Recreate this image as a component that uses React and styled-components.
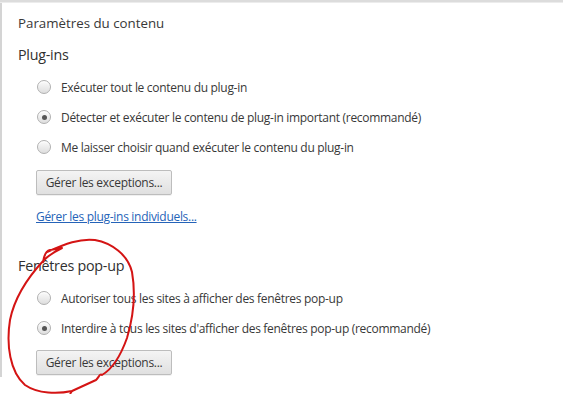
import styled, { createGlobalStyle } from "styled-components";

const GlobalStyle = createGlobalStyle`
  html, body {
    margin: 0;
    padding: 0;
    background: #fff;
  }
  body {
    font-family: "Open Sans", "Noto Sans", sans-serif;
    color: #333;
  }
`;

const Page = styled.div`
  position: relative;
  width: 563px;
  height: 394px;
  overflow: hidden;
  background: #fff;
`;

const TopBar = styled.div`
  height: 2px;
  background: #dcdcdc;
  border-bottom: 1px solid #ececec;
`;

const Panel = styled.div`
  display: flex;
  flex-direction: column;
  align-items: flex-start;
  height: 374px;
  box-sizing: border-box;
  border-left: 2px solid #d4d4d4;
  padding: 10px 0 0 16px;
`;

const Title = styled.div`
  font-size: 13.3px;
  line-height: 20px;
  color: #383838;
`;

const Heading = styled.div`
  font-size: 14.3px;
  line-height: 20px;
  letter-spacing: -0.25px;
  color: #303030;
  margin-top: ${(p) => p.$top}px;
`;

const Options = styled.div`
  display: flex;
  flex-direction: column;
  margin-top: ${(p) => p.$top}px;
`;

const Option = styled.label`
  display: flex;
  align-items: center;
  gap: 10px;
  height: 30px;
  padding-left: 19px;
  font-size: 12px;
  letter-spacing: -0.3px;
  color: #383838;
`;

const Radio = styled.span`
  position: relative;
  width: 14px;
  height: 14px;
  box-sizing: border-box;
  border-radius: 50%;
  border: 1px solid #b0b0b0;
  background: linear-gradient(#fbfbfb, #dedede);
  box-shadow: inset 0 1px 1px #fff;
  flex-shrink: 0;

  &::after {
    content: "";
    display: ${(p) => (p.$checked ? "block" : "none")};
    position: absolute;
    left: 3.5px;
    top: 3.5px;
    width: 5px;
    height: 5px;
    border-radius: 50%;
    background: #555;
  }
`;

const Button = styled.button`
  margin: ${(p) => p.$top}px 0 0 18px;
  width: 136px;
  height: 25px;
  padding: 0;
  font-family: inherit;
  font-size: 12px;
  letter-spacing: -0.3px;
  color: #383838;
  border: 1px solid #bdbdbd;
  border-radius: 2px;
  background: linear-gradient(#f4f4f4, #e0e0e0);
  box-shadow: 0 1px 0 rgba(0, 0, 0, 0.06);
`;

const Link = styled.a`
  margin: 14px 0 0 18px;
  font-size: 12px;
  line-height: 16px;
  letter-spacing: -0.3px;
  color: #2563b8;
  text-decoration: underline;
  cursor: pointer;
`;

const Scribble = styled.svg`
  position: absolute;
  left: 0;
  top: 0;
  pointer-events: none;
`;

const plugins = [
  { label: "Exécuter tout le contenu du plug-in" },
  { label: "Détecter et exécuter le contenu de plug-in important (recommandé)", checked: true },
  { label: "Me laisser choisir quand exécuter le contenu du plug-in" },
];

const popups = [
  { label: "Autoriser tous les sites à afficher des fenêtres pop-up" },
  { label: "Interdire à tous les sites d'afficher des fenêtres pop-up (recommandé)", checked: true },
];

function OptionList({ items, top }) {
  return (
    <Options $top={top}>
      {items.map((item) => (
        <Option key={item.label}>
          <Radio $checked={item.checked} />
          {item.label}
        </Option>
      ))}
    </Options>
  );
}

export default function App() {
  return (
    <Page>
      <GlobalStyle />
      <TopBar />
      <Panel>
        <Title>Paramètres du contenu</Title>
        <Heading $top={12}>Plug-ins</Heading>
        <OptionList items={plugins} top={7} />
        <Button $top={8}>Gérer les exceptions...</Button>
        <Link>Gérer les plug-ins individuels...</Link>
        <Heading $top={31}>Fenêtres pop-up</Heading>
        <OptionList items={popups} top={7} />
        <Button $top={7}>Gérer les exceptions...</Button>
      </Panel>
      <Scribble width="563" height="394" viewBox="0 0 563 394">
        <path
          d="M43,262 C44,255 46,251 50,250 L62,248 C56,251 50,254 44,260
             C30,275 15,295 10,320 C6,345 10,372 25,385 C38,394 58,394 72,391
             L96,380 C99,377 100,373 102,375 C114,368 122,352 127,338
             C133,318 136,295 132,272 C128,255 112,243 95,240 C80,238 65,244 47,252"
          fill="none"
          stroke="#d41414"
          strokeWidth="2"
          strokeLinecap="round"
          strokeLinejoin="round"
        />
        <path d="M72,391 L70,394" fill="none" stroke="#d41414" strokeWidth="2" />
      </Scribble>
    </Page>
  );
}
